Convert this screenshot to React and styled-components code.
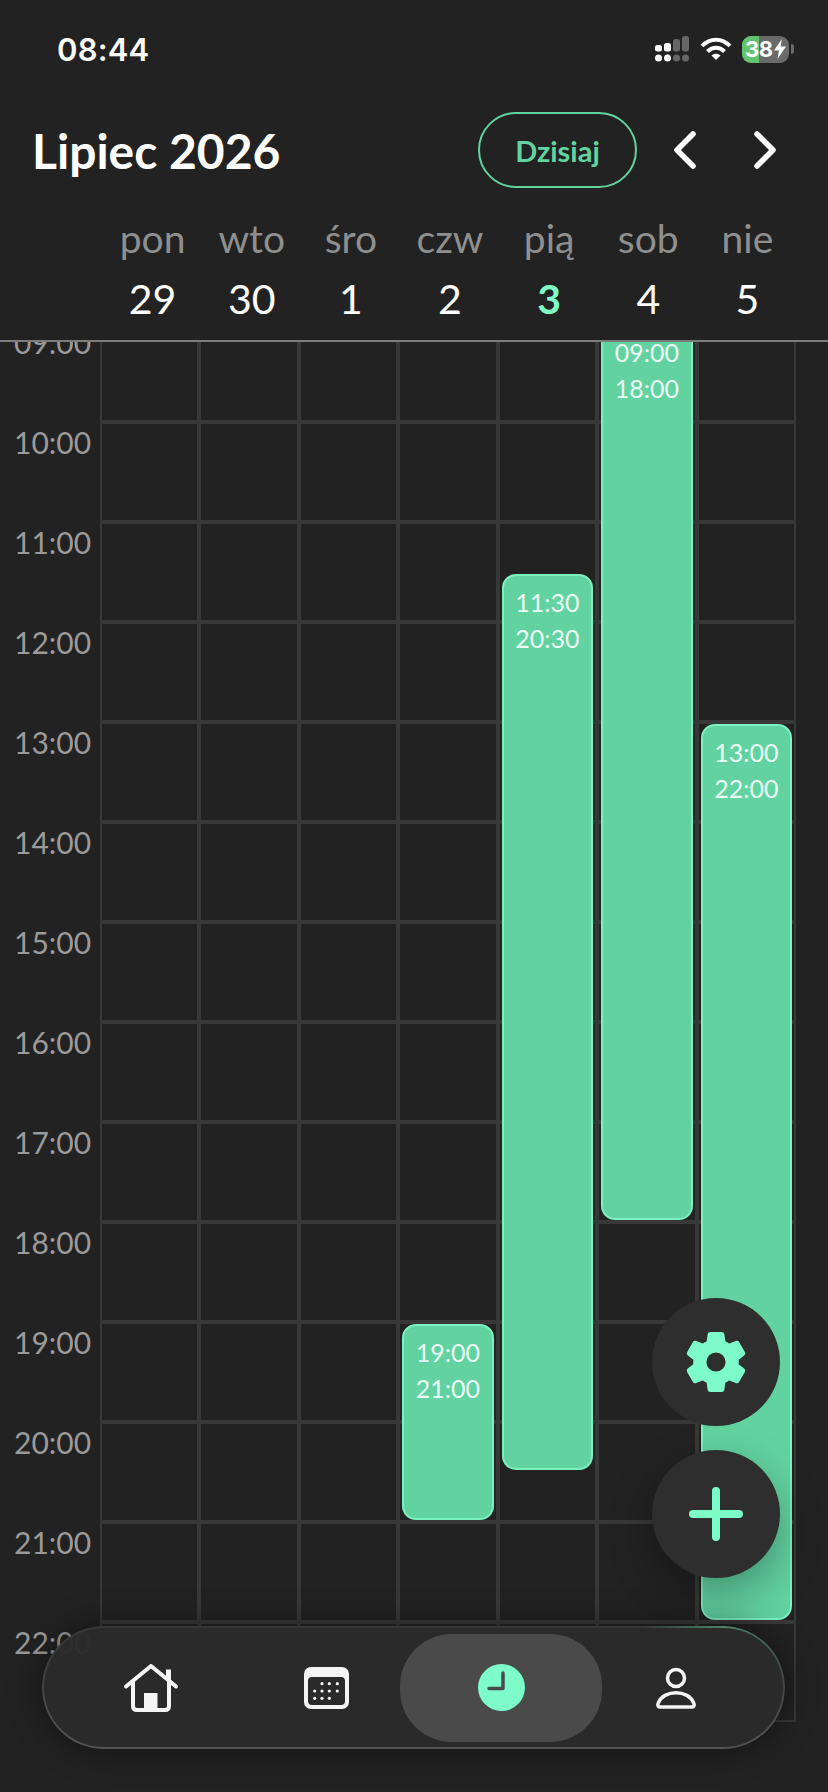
import React from "react";
import styled, { createGlobalStyle } from "styled-components";

const MINT = "#7dfcc9";
const GREEN = "#62d3a0";

const GlobalStyle = createGlobalStyle`
  html, body {
    margin: 0;
    padding: 0;
    background: #222222;
  }
  * {
    box-sizing: border-box;
  }
`;

const days = [
  { name: "pon", date: 29 },
  { name: "wto", date: 30 },
  { name: "śro", date: 1 },
  { name: "czw", date: 2, events: [{ start: 19, end: 21, from: "19:00", to: "21:00" }] },
  { name: "pią", date: 3, today: true, events: [{ start: 11.5, end: 20.5, from: "11:30", to: "20:30" }] },
  { name: "sob", date: 4, events: [{ start: 9, end: 18, from: "09:00", to: "18:00" }] },
  { name: "nie", date: 5, events: [{ start: 13, end: 22, from: "13:00", to: "22:00" }] },
];

const hours = [9, 10, 11, 12, 13, 14, 15, 16, 17, 18, 19, 20, 21, 22];

const App = () => {
  return (
    <Screen>
      <GlobalStyle />
      <Header>
        <StatusBar>
          <Clock>08:44</Clock>
          <StatusIcons>
            <SignalIcon />
            <WifiIcon />
            <Battery>
              <BatteryCharge />
              <BatteryText>38</BatteryText>
              <BoltIcon />
            </Battery>
            <BatteryNub />
          </StatusIcons>
        </StatusBar>

        <TitleRow>
          <Title>Lipiec 2026</Title>
          <TodayButton>Dzisiaj</TodayButton>
          <Chevron viewBox="0 0 24 38">
            <path d="M20 3 L4 19 L20 35" />
          </Chevron>
          <Chevron $next viewBox="0 0 24 38">
            <path d="M4 3 L20 19 L4 35" />
          </Chevron>
        </TitleRow>

        <WeekRow>
          {days.map((day) => (
            <WeekDay key={day.name}>
              <DayName>{day.name}</DayName>
              <DayDate $today={day.today}>{day.date}</DayDate>
            </WeekDay>
          ))}
        </WeekRow>
      </Header>

      <Viewport>
        <Board>
          <Hours>
            {hours.map((hour) => (
              <HourLabel key={hour}>{String(hour).padStart(2, "0")}:00</HourLabel>
            ))}
          </Hours>
          <Columns>
            {days.map((day) => (
              <DayColumn key={day.name}>
                {hours.map((hour) => (
                  <Cell key={hour} />
                ))}
                {day.events &&
                  day.events.map((event) => (
                    <Shift key={event.from} $start={event.start} $end={event.end}>
                      <div>{event.from}</div>
                      <div>{event.to}</div>
                    </Shift>
                  ))}
              </DayColumn>
            ))}
          </Columns>
        </Board>
      </Viewport>

      <FabStack>
        <Fab>
          <GearIcon />
        </Fab>
        <Fab $raised>
          <svg width="54" height="54" viewBox="0 0 54 54" fill="none" stroke={MINT} strokeWidth="8" strokeLinecap="round">
            <path d="M27 4 V50 M4 27 H50" />
          </svg>
        </Fab>
      </FabStack>

      <Nav>
        <NavItem>
          <HomeIcon />
        </NavItem>
        <NavItem>
          <CalendarIcon />
        </NavItem>
        <NavItem $active>
          <ClockIcon />
        </NavItem>
        <NavItem>
          <PersonIcon />
        </NavItem>
      </Nav>
    </Screen>
  );
};

const GearIcon = () => (
  <svg width="72" height="72" viewBox="0 0 24 24" fill={MINT} stroke={MINT} strokeWidth="0.8" strokeLinejoin="round">
    <path d="M19.14 12.94c.04-.3.06-.61.06-.94 0-.32-.02-.64-.07-.94l2.03-1.58c.18-.14.23-.41.12-.61l-1.92-3.32c-.12-.22-.37-.29-.59-.22l-2.39.96c-.5-.38-1.03-.7-1.62-.94l-.36-2.54c-.04-.24-.24-.41-.48-.41h-3.84c-.24 0-.43.17-.47.41l-.36 2.54c-.59.24-1.13.57-1.62.94l-2.39-.96c-.22-.08-.47 0-.59.22L2.74 8.87c-.12.21-.08.47.12.61l2.03 1.58c-.05.3-.09.63-.09.94s.02.64.07.94l-2.03 1.58c-.18.14-.23.41-.12.61l1.92 3.32c.12.22.37.29.59.22l2.39-.96c.5.38 1.03.7 1.62.94l.36 2.54c.05.24.24.41.48.41h3.84c.24 0 .44-.17.47-.41l.36-2.54c.59-.24 1.13-.56 1.62-.94l2.39.96c.22.08.47 0 .59-.22l1.92-3.32c.12-.22.07-.47-.12-.61l-2.01-1.58zM12 15.6c-1.98 0-3.6-1.62-3.6-3.6s1.62-3.6 3.6-3.6 3.6 1.62 3.6 3.6-1.62 3.6-3.6 3.6z" />
  </svg>
);

const SignalIcon = () => (
  <svg width="34" height="26" viewBox="0 0 34 26">
    <rect x="0" y="9" width="7" height="6.5" rx="2.5" fill="#fff" />
    <rect x="9" y="7" width="7" height="8.5" rx="2.5" fill="#fff" />
    <rect x="18" y="3" width="7" height="12.5" rx="2.5" fill="#666" />
    <rect x="27" y="0" width="7" height="15.5" rx="2.5" fill="#666" />
    <circle cx="3.5" cy="22" r="3.5" fill="#fff" />
    <circle cx="12.5" cy="22" r="3.5" fill="#fff" />
    <circle cx="21.5" cy="22" r="3.5" fill="#666" />
    <circle cx="30.5" cy="22" r="3.5" fill="#666" />
  </svg>
);

const WifiIcon = () => (
  <svg width="32" height="24" viewBox="0 0 32 24" fill="none" stroke="#fff" strokeWidth="4">
    <path d="M2 9 C10 0.5 22 0.5 30 9" />
    <path d="M7.5 14.5 C12.5 9.5 19.5 9.5 24.5 14.5" />
    <path d="M11.5 18.5 L16 23 L20.5 18.5 C18 16 14 16 11.5 18.5 Z" fill="#fff" stroke="none" />
  </svg>
);

const BoltIcon = () => (
  <svg width="12" height="20" viewBox="0 0 12 20">
    <path d="M8 0 L0 11.5 H5 L3.5 20 L12 7.5 H6.5 Z" fill="#fff" />
  </svg>
);

const HomeIcon = () => (
  <svg width="54" height="48" viewBox="0 0 54 48" fill="none" stroke="#f5f5f5" strokeWidth="4" strokeLinecap="round" strokeLinejoin="round">
    <path d="M2 22.5 L27 2 L52 22.5" />
    <path d="M9 18 V42 Q9 46 13 46 H41 Q45 46 45 42 V18" />
    <path d="M44.5 16 V5.5" strokeLinecap="butt" strokeWidth="5" />
    <path d="M20 46 V29 H33.5 V46 Z" fill="#f5f5f5" stroke="none" />
  </svg>
);

const CalendarIcon = () => {
  const dots = [
    [18, 16.7], [25.3, 16.7], [33.3, 16.7],
    [10.7, 24], [18, 24], [25.3, 24], [33.3, 24],
    [10.7, 31.3], [18, 31.3], [25.3, 31.3],
  ];
  return (
    <svg width="45" height="42" viewBox="0 0 45 42">
      <rect width="45" height="42" rx="7" fill="#f4f4f4" />
      <rect x="4" y="10" width="37" height="28" rx="4" fill="#2a2a2a" />
      {dots.map(([cx, cy]) => (
        <circle key={`${cx}-${cy}`} cx={cx} cy={cy} r="1.6" fill="#f4f4f4" />
      ))}
    </svg>
  );
};

const ClockIcon = () => (
  <svg width="47" height="47" viewBox="0 0 47 47">
    <circle cx="23.5" cy="23.5" r="23.5" fill={MINT} />
    <path d="M25 9 V24.5 H11" fill="none" stroke="#4a4a4a" strokeWidth="3.5" strokeLinecap="round" strokeLinejoin="round" />
  </svg>
);

const PersonIcon = () => (
  <svg width="40" height="42" viewBox="0 0 40 42" fill="none" stroke="#f5f5f5" strokeWidth="3.5">
    <circle cx="20" cy="11" r="8.5" />
    <path d="M4 40 C1.5 40 1.5 37.5 2.5 35.5 C5 29.5 12 25.8 20 25.8 C28 25.8 35 29.5 37.5 35.5 C38.5 37.5 38.5 40 36 40 Z" strokeLinejoin="round" />
  </svg>
);

const Screen = styled.div`
  position: relative;
  width: 828px;
  height: 1792px;
  overflow: hidden;
  display: flex;
  flex-direction: column;
  background: #222222;
  font-family: Lato, "Noto Sans", sans-serif;
  color: #fff;
`;

const Header = styled.header`
  flex: none;
  height: 342px;
  border-bottom: 2px solid #7c7c7c;
`;

const StatusBar = styled.div`
  height: 100px;
  padding: 0 34px 2px 57px;
  display: flex;
  align-items: center;
  justify-content: space-between;
`;

const Clock = styled.span`
  font-family: Inter, sans-serif;
  font-size: 31px;
  font-weight: 600;
  letter-spacing: 0.2px;
`;

const StatusIcons = styled.div`
  display: flex;
  align-items: center;
  svg {
    display: block;
  }
  > svg:first-child {
    margin-right: 11px;
  }
  > svg:nth-child(2) {
    margin-right: 10px;
  }
`;

const Battery = styled.div`
  position: relative;
  width: 47px;
  height: 27px;
  padding-left: 3px;
  border-radius: 9px;
  overflow: hidden;
  background: #6a6a6a;
  display: flex;
  align-items: center;
  gap: 1px;
  font-family: Inter, sans-serif;
  font-size: 22px;
  font-weight: 700;
  line-height: 27px;
`;

const BatteryCharge = styled.div`
  position: absolute;
  left: 0;
  top: 0;
  bottom: 0;
  width: 17px;
  background: #62c46c;
`;

const BatteryText = styled.span`
  position: relative;
  letter-spacing: -0.5px;
`;

const BatteryNub = styled.div`
  width: 3px;
  height: 10px;
  margin-left: 2px;
  border-radius: 0 3px 3px 0;
  background: #6a6a6a;
`;

const TitleRow = styled.div`
  height: 100px;
  padding: 0 51px 0 32px;
  display: flex;
  align-items: center;
`;

const Title = styled.h1`
  margin: 0 auto 0 0;
  font-size: 48px;
  font-weight: 700;
  line-height: 56px;
  padding-top: 2px;
`;

const TodayButton = styled.button`
  width: 159px;
  height: 76px;
  padding: 0;
  border: 2px solid ${GREEN};
  border-radius: 38px;
  background: transparent;
  color: ${GREEN};
  font-family: inherit;
  font-size: 29px;
  font-weight: 700;
`;

const Chevron = styled.svg`
  width: 24px;
  height: 38px;
  margin-left: ${(p) => (p.$next ? "56px" : "36px")};
  fill: none;
  stroke: #fff;
  stroke-width: 5.5;
  stroke-linecap: round;
  stroke-linejoin: round;
`;

const WeekRow = styled.div`
  height: 140px;
  padding: 18px 31px 0 103px;
  display: grid;
  grid-template-columns: repeat(7, 1fr);
`;

const WeekDay = styled.div`
  display: flex;
  flex-direction: column;
  align-items: center;
  gap: 21px;
`;

const DayName = styled.span`
  font-size: 39px;
  line-height: 40px;
  color: #8f8f8f;
`;

const DayDate = styled.span`
  font-size: 41px;
  line-height: 40px;
  font-weight: ${(p) => (p.$today ? 700 : 400)};
  color: ${(p) => (p.$today ? MINT : "#fff")};
`;

const Viewport = styled.main`
  flex: 1;
  min-height: 0;
  overflow: hidden;
`;

const Board = styled.div`
  margin-top: -20px;
  display: flex;
`;

const Hours = styled.div`
  flex: none;
  width: 100px;
`;

const HourLabel = styled.div`
  height: 100px;
  padding: 2px 0 0 14px;
  font-size: 30px;
  line-height: 36px;
  color: #9a9a9a;
`;

const Columns = styled.div`
  flex: none;
  width: 696px;
  display: grid;
  grid-template-columns: repeat(7, 1fr);
`;

const DayColumn = styled.div`
  position: relative;
`;

const Cell = styled.div`
  height: 100px;
  border: 2px solid #383838;
`;

const Shift = styled.div`
  position: absolute;
  left: 4px;
  right: 4px;
  top: ${(p) => (p.$start - 9) * 100 + 2}px;
  height: ${(p) => (p.$end - p.$start) * 100 - 4}px;
  padding-top: 8px;
  border: 2px solid #7df0c0;
  border-radius: 14px;
  background: ${GREEN};
  color: #eafff6;
  font-size: 25px;
  line-height: 36px;
  text-align: center;
`;

const FabStack = styled.div`
  position: absolute;
  right: 48px;
  bottom: 214px;
  display: flex;
  flex-direction: column;
  gap: 24px;
`;

const Fab = styled.button`
  width: 128px;
  height: 128px;
  padding: 0;
  border: 0;
  border-radius: 50%;
  background: #2e2e2e;
  box-shadow: ${(p) => (p.$raised ? "0 16px 44px rgba(0, 0, 0, 0.32)" : "none")};
  display: flex;
  align-items: center;
  justify-content: center;
`;

const Nav = styled.nav`
  position: absolute;
  left: 42px;
  bottom: 43px;
  width: 743px;
  height: 123px;
  padding: 0 21.5px;
  border-radius: 62px;
  background: rgba(42, 42, 42, 0.97);
  box-shadow: 0 0 34px rgba(0, 0, 0, 0.45);
  display: flex;
  align-items: center;
  &::before {
    content: "";
    position: absolute;
    inset: 0;
    padding: 2px;
    border-radius: inherit;
    background: radial-gradient(circle at 92% 0, rgba(98, 211, 160, 0.5), transparent 12%),
      linear-gradient(to bottom, rgba(255, 255, 255, 0.06), rgba(255, 255, 255, 0.2));
    -webkit-mask: linear-gradient(#000 0 0) content-box, linear-gradient(#000 0 0);
    -webkit-mask-composite: xor;
    mask-composite: exclude;
    pointer-events: none;
  }
`;

const NavItem = styled.div`
  flex: none;
  width: ${(p) => (p.$active ? "202px" : "175px")};
  height: 108px;
  margin: ${(p) => (p.$active ? "0 -13.5px" : "0")};
  border-radius: 52px;
  background: ${(p) => (p.$active ? "#4a4a4a" : "transparent")};
  display: flex;
  align-items: center;
  justify-content: center;
`;

export default App;
